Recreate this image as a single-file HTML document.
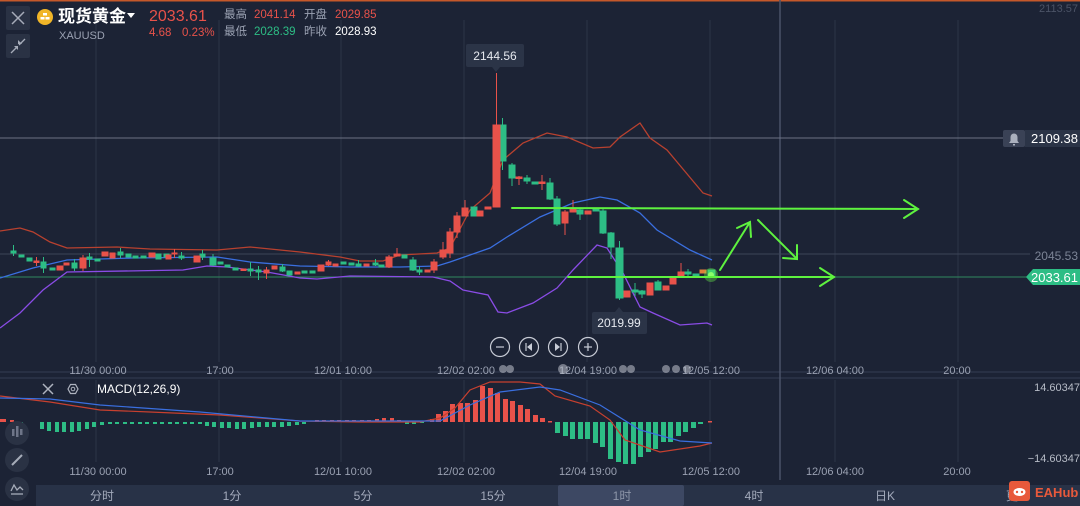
<!DOCTYPE html>
<html><head><meta charset="utf-8"><style>
html,body{margin:0;padding:0;background:#1c2335;width:1080px;height:506px;overflow:hidden;font-family:"Liberation Sans","Noto Sans CJK SC",sans-serif;}
svg{position:absolute;left:0;top:0}
text{font-family:"Liberation Sans","Noto Sans CJK SC",sans-serif}
</style></head><body>
<svg width="1080" height="506" viewBox="0 0 1080 506">
<rect width="1080" height="506" fill="#1c2335"/>
<rect x="0" y="0" width="1080" height="1.5" fill="#c5582a"/>
<!-- grid -->
<g stroke="#2c3447" stroke-width="1">
<line x1="96" y1="20" x2="96" y2="362"/><line x1="219" y1="20" x2="219" y2="362"/><line x1="341" y1="20" x2="341" y2="362"/><line x1="464" y1="20" x2="464" y2="362"/><line x1="587" y1="20" x2="587" y2="362"/><line x1="710" y1="20" x2="710" y2="362"/><line x1="835" y1="20" x2="835" y2="362"/><line x1="958" y1="20" x2="958" y2="362"/>
<line x1="96" y1="380" x2="96" y2="462"/><line x1="219" y1="380" x2="219" y2="462"/><line x1="341" y1="380" x2="341" y2="462"/><line x1="464" y1="380" x2="464" y2="462"/><line x1="587" y1="380" x2="587" y2="462"/><line x1="710" y1="380" x2="710" y2="462"/><line x1="835" y1="380" x2="835" y2="462"/><line x1="958" y1="380" x2="958" y2="462"/>
</g>
<line x1="0" y1="372" x2="1080" y2="372" stroke="#343d52"/>
<line x1="0" y1="378" x2="1080" y2="378" stroke="#343d52"/>
<line x1="780" y1="0" x2="780" y2="480" stroke="#4a5368" stroke-width="1.5"/>
<line x1="0" y1="138" x2="1003" y2="138" stroke="#6b7284" stroke-width="1"/>
<line x1="0" y1="254" x2="1030" y2="254" stroke="#3c4558"/>
<line x1="0" y1="277" x2="1030" y2="277" stroke="#2f8a5e" stroke-width="1"/>
<!-- bands -->
<polyline fill="none" stroke="#b8412f" stroke-width="1.3" points="0,231 20,228 33,232 50,242 67,248 117,247 150,249 217,250 250,247 300,252 340,257 360,261 383,261 400,255 437,253 450,248 470,210 490,193 503,160 523,143 547,133 567,137 593,148 610,147 620,137 640,123 650,138 667,150 703,193 712,196"/>
<polyline fill="none" stroke="#3a6fe0" stroke-width="1.3" points="0,278 33,268 67,260 100,259 133,258 217,257 250,262 300,266 350,267 400,267 437,266 450,262 490,248 507,237 540,217 573,203 600,197 617,200 640,213 657,230 690,250 712,260"/>
<polyline fill="none" stroke="#8a4ce6" stroke-width="1.3" points="0,328 20,313 43,290 67,272 183,270 207,266 227,267 267,272 300,278 317,279 350,276 433,277 450,281 463,290 488,295 498,312 507,313 533,303 557,288 573,270 597,245 607,248 623,273 640,307 653,313 680,325 707,323 712,325"/>
<!-- candles -->
<g stroke-width="1">
<g fill="#2dbd85" stroke="#2dbd85">
<rect x="11" y="251" width="5" height="2"/><line x1="13.5" y1="245" x2="13.5" y2="256"/>
<rect x="19" y="255" width="5" height="2"/><rect x="27" y="258" width="5" height="3"/>
<rect x="41" y="262" width="5" height="6"/><line x1="43.5" y1="257" x2="43.5" y2="273"/>
<rect x="50" y="268" width="5" height="2"/>
<rect x="72" y="263" width="5" height="5"/><line x1="74.5" y1="259" x2="74.5" y2="271"/>
<rect x="87" y="257" width="5" height="2"/><line x1="89.5" y1="253" x2="89.5" y2="267"/>
<rect x="95" y="259" width="5" height="2"/>
<rect x="118" y="252" width="5" height="3"/><line x1="120.5" y1="248" x2="120.5" y2="258"/>
<rect x="126" y="254" width="5" height="3"/><rect x="133" y="256" width="5" height="2"/><rect x="141" y="256" width="5" height="2"/>
<rect x="156" y="254" width="5" height="5"/><rect x="164" y="254" width="5" height="3"/>
<rect x="179" y="256" width="5" height="2"/><line x1="181.5" y1="252" x2="181.5" y2="260"/>
<rect x="200" y="254" width="5" height="3"/><line x1="202.5" y1="250" x2="202.5" y2="260"/>
<rect x="210" y="258" width="6" height="7"/><line x1="213" y1="254" x2="213" y2="266"/>
<rect x="218" y="262" width="5" height="2"/><rect x="225" y="265" width="5" height="2"/>
<rect x="233" y="268" width="5" height="2"/><rect x="248" y="269" width="5" height="2"/><line x1="250.5" y1="262" x2="250.5" y2="276"/>
<rect x="256" y="270" width="5" height="2"/><line x1="258.5" y1="266" x2="258.5" y2="280"/>
<rect x="280" y="267" width="5" height="4"/><line x1="282.5" y1="264" x2="282.5" y2="272"/>
<rect x="287" y="271" width="5" height="4"/><rect x="302" y="271" width="5" height="2"/><rect x="310" y="271" width="5" height="2"/>
<rect x="341" y="262" width="5" height="2"/><rect x="349" y="263" width="5" height="2"/><rect x="356" y="264" width="5" height="2"/><line x1="358.5" y1="260" x2="358.5" y2="267"/>
<rect x="373" y="263" width="5" height="2"/><line x1="375.5" y1="259" x2="375.5" y2="266"/>
<rect x="379" y="265" width="5" height="2"/>
<rect x="402" y="255" width="5" height="3"/>
<rect x="410" y="260" width="6" height="10"/><line x1="413" y1="257" x2="413" y2="271"/>
<rect x="417" y="270" width="5" height="2"/><line x1="419.5" y1="266" x2="419.5" y2="275"/>
<rect x="471" y="207" width="6" height="9"/>
<rect x="499" y="125" width="7" height="36"/><line x1="502.5" y1="118" x2="502.5" y2="170"/>
<rect x="509" y="165" width="6" height="13"/><line x1="512" y1="163" x2="512" y2="186"/>
<rect x="524" y="178" width="6" height="3"/><line x1="527" y1="175" x2="527" y2="184"/>
<rect x="532" y="182" width="6" height="2"/>
<rect x="547" y="183" width="6" height="16"/><line x1="550" y1="178" x2="550" y2="200"/>
<rect x="554" y="199" width="6" height="25"/><line x1="557" y1="196" x2="557" y2="226"/>
<rect x="577" y="210" width="6" height="4"/><line x1="580" y1="208" x2="580" y2="220"/>
<rect x="593" y="209" width="6" height="2"/>
<rect x="600" y="211" width="6" height="22"/><line x1="603" y1="209" x2="603" y2="234"/>
<rect x="608" y="233" width="6" height="14"/><line x1="611" y1="232" x2="611" y2="259"/>
<rect x="616" y="248" width="7" height="50"/><line x1="619.5" y1="241" x2="619.5" y2="300"/>
<rect x="632" y="290" width="6" height="2"/><line x1="635" y1="283" x2="635" y2="296"/>
<rect x="639" y="291" width="6" height="3"/><line x1="642" y1="290" x2="642" y2="298"/>
<rect x="655" y="282" width="6" height="8"/><line x1="658" y1="280" x2="658" y2="290"/>
<rect x="685" y="272" width="6" height="2"/><line x1="688" y1="269" x2="688" y2="276"/>
<rect x="693" y="274" width="6" height="1.5"/>
<rect x="708" y="270" width="7" height="6"/>
</g>
<g fill="#e8524a" stroke="#e8524a">
<rect x="34" y="261" width="5" height="1.5"/><line x1="36.5" y1="257" x2="36.5" y2="266"/>
<rect x="57" y="266" width="6" height="4"/>
<rect x="64" y="263" width="5" height="2"/>
<rect x="80" y="258" width="6" height="10"/><line x1="83" y1="255" x2="83" y2="271"/>
<rect x="102" y="252" width="6" height="4"/>
<rect x="110" y="253" width="5" height="5"/>
<rect x="149" y="253" width="6" height="4"/>
<rect x="166" y="255" width="5" height="4"/>
<rect x="172" y="253" width="5" height="1"/><line x1="174.5" y1="249" x2="174.5" y2="258"/>
<rect x="194" y="256" width="6" height="6"/>
<rect x="241" y="269" width="5" height="1.5"/>
<rect x="264" y="270" width="5" height="3"/><line x1="266.5" y1="267" x2="266.5" y2="279"/>
<rect x="272" y="266" width="5" height="3"/>
<rect x="295" y="272" width="5" height="2"/>
<rect x="318" y="265" width="6" height="6"/>
<rect x="326" y="262" width="5" height="3"/><line x1="328.5" y1="260" x2="328.5" y2="266"/>
<rect x="333" y="264" width="5" height="2"/>
<rect x="364" y="264" width="5" height="2"/>
<rect x="386" y="257" width="6" height="10"/><line x1="389" y1="255" x2="389" y2="268"/>
<rect x="394" y="254" width="6" height="2"/><line x1="397" y1="248" x2="397" y2="256"/>
<rect x="425" y="270" width="5" height="2"/>
<rect x="431" y="262" width="6" height="8"/><line x1="434" y1="259" x2="434" y2="273"/>
<rect x="440" y="250" width="6" height="7"/><line x1="443" y1="242" x2="443" y2="259"/>
<rect x="447" y="232" width="6" height="21"/><line x1="450" y1="228" x2="450" y2="258"/>
<rect x="454" y="216" width="6" height="16"/><line x1="457" y1="212" x2="457" y2="238"/>
<rect x="462" y="208" width="6" height="8"/><line x1="465" y1="200" x2="465" y2="216"/>
<rect x="477" y="211" width="6" height="5"/>
<rect x="485" y="207" width="6" height="2"/>
<rect x="493" y="125" width="7" height="82"/><line x1="496.5" y1="73" x2="496.5" y2="207"/>
<rect x="516" y="177" width="6" height="1.5"/><line x1="519" y1="176" x2="519" y2="185"/>
<rect x="539" y="182" width="6" height="1.5"/><line x1="542" y1="175" x2="542" y2="190"/>
<rect x="562" y="212" width="6" height="11"/><line x1="565" y1="210" x2="565" y2="235"/>
<rect x="570" y="209" width="6" height="3"/><line x1="573" y1="200" x2="573" y2="212"/>
<rect x="585" y="211" width="6" height="3"/>
<rect x="624" y="291" width="6" height="6"/>
<rect x="647" y="283" width="6" height="12"/>
<rect x="663" y="286" width="6" height="4"/>
<rect x="670" y="278" width="6" height="6"/>
<rect x="678" y="272" width="6" height="5"/><line x1="681" y1="263" x2="681" y2="277"/>
<rect x="700" y="270" width="6" height="3" fill="#e0803a" stroke="#e0803a"/>
</g>
</g>
<!-- glow -->
<circle cx="711" cy="275" r="7" fill="#6cff4a" opacity="0.35"/>
<circle cx="711" cy="275" r="3" fill="#8cff6a"/>
<!-- green arrows -->
<g stroke="#5ef23f" stroke-width="2" fill="none" stroke-linecap="round">
<line x1="512" y1="208" x2="918" y2="209"/><polyline points="904,200 918,209 904,218"/>
<line x1="568" y1="277" x2="834" y2="277"/><polyline points="820,268 834,277 820,286"/>
<line x1="720" y1="270" x2="750" y2="222"/><polyline points="737,228 750,222 751,237"/>
<line x1="758" y1="220" x2="797" y2="259"/><polyline points="783,258 797,259 797,245"/>
</g>
<!-- price tooltips -->
<rect x="466" y="44" width="58" height="23" rx="2" fill="#2b3447"/>
<polygon points="492,67 500,67 496,72" fill="#2b3447"/>
<text x="495" y="60" fill="#e6e9ef" font-size="12" text-anchor="middle">2144.56</text>
<rect x="592" y="312" width="55" height="22" rx="2" fill="#2b3447"/>
<polygon points="615,312 623,312 619,307" fill="#2b3447"/>
<text x="619" y="327" fill="#e6e9ef" font-size="12" text-anchor="middle">2019.99</text>
<!-- zoom controls -->
<g stroke="#c8ccd6" stroke-width="1.2" fill="none">
<circle cx="500" cy="347" r="9.5"/><circle cx="529" cy="347" r="9.5"/><circle cx="558" cy="347" r="9.5"/><circle cx="588" cy="347" r="9.5"/>
<line x1="496" y1="347" x2="504" y2="347"/><line x1="584" y1="347" x2="592" y2="347"/><line x1="588" y1="343" x2="588" y2="351"/>
<line x1="526" y1="343" x2="526" y2="351"/><line x1="561" y1="343" x2="561" y2="351"/>
</g>
<polygon points="532,343 532,351 527,347" fill="#c8ccd6"/><polygon points="555,343 555,351 560,347" fill="#c8ccd6"/>
<!-- axis labels -->
<g fill="#9aa1b2" font-size="11" text-anchor="middle">
<text x="98" y="374">11/30 00:00</text><text x="220" y="374">17:00</text><text x="343" y="374">12/01 10:00</text><text x="466" y="374">12/02 02:00</text><text x="588" y="374">12/04 19:00</text><text x="711" y="374">12/05 12:00</text><text x="835" y="374">12/06 04:00</text><text x="957" y="374">20:00</text>
<text x="98" y="475">11/30 00:00</text><text x="220" y="475">17:00</text><text x="343" y="475">12/01 10:00</text><text x="466" y="475">12/02 02:00</text><text x="588" y="475">12/04 19:00</text><text x="711" y="475">12/05 12:00</text><text x="835" y="475">12/06 04:00</text><text x="957" y="475">20:00</text>
</g>
<g fill="#c0c4ce" opacity="0.55"><circle cx="503" cy="369" r="4"/><circle cx="510" cy="369" r="4"/><circle cx="563" cy="369" r="5"/><circle cx="623" cy="369" r="4"/><circle cx="631" cy="369" r="4"/><circle cx="666" cy="369" r="4"/><circle cx="676" cy="369" r="4"/><circle cx="687" cy="369" r="4"/></g>
<!-- right labels -->
<text x="1078" y="12" fill="#4b5366" font-size="11" text-anchor="end">2113.57</text>
<rect x="1003" y="130" width="22" height="17" rx="2" fill="#3a4256"/>
<path d="M1009,143 h10 l-1.5,-2 v-4 a3.5,3.5 0 0 0 -7,0 v4 z M1013,144 h2 v1.5 h-2z" fill="#aab0bd"/>
<rect x="1025" y="130" width="55" height="17" fill="#2b3447"/>
<text x="1078" y="143" fill="#fff" font-size="13" text-anchor="end">2109.38</text>
<text x="1078" y="260" fill="#7c8496" font-size="12" text-anchor="end">2045.53</text>
<polygon points="1026,277 1033,269 1080,269 1080,285 1033,285" fill="#2dbd85"/>
<text x="1078" y="282" fill="#fff" font-size="13" text-anchor="end">2033.61</text>
<text x="1080" y="391" fill="#b7bcc7" font-size="11" text-anchor="end">14.60347</text>
<text x="1080" y="462" fill="#b7bcc7" font-size="11" text-anchor="end">−14.60347</text>
<!-- MACD -->
<g fill="#2dbd85">
<rect x="19" y="422" width="4" height="3"/><rect x="40" y="422" width="4" height="7"/><rect x="47" y="422" width="4" height="9"/><rect x="55" y="422" width="4" height="10"/><rect x="62" y="422" width="4" height="10"/><rect x="70" y="422" width="4" height="10"/><rect x="77" y="422" width="4" height="9"/><rect x="85" y="422" width="4" height="7"/><rect x="92" y="422" width="4" height="5"/><rect x="100" y="422" width="4" height="3"/>
<rect x="108" y="422" width="4" height="2"/><rect x="115" y="422" width="4" height="2"/><rect x="123" y="422" width="4" height="2"/><rect x="130" y="422" width="4" height="2"/><rect x="138" y="422" width="4" height="2"/><rect x="145" y="422" width="4" height="2"/><rect x="153" y="422" width="4" height="2"/><rect x="160" y="422" width="4" height="2"/><rect x="168" y="422" width="4" height="2"/><rect x="175" y="422" width="4" height="2"/><rect x="183" y="422" width="4" height="2"/><rect x="190" y="422" width="4" height="2"/><rect x="198" y="422" width="4" height="2"/>
<rect x="205" y="422" width="4" height="4"/><rect x="212" y="422" width="4" height="5"/><rect x="220" y="422" width="4" height="6"/><rect x="227" y="422" width="4" height="6"/><rect x="235" y="422" width="4" height="7"/><rect x="242" y="422" width="4" height="7"/><rect x="250" y="422" width="4" height="6"/><rect x="257" y="422" width="4" height="5"/><rect x="265" y="422" width="4" height="5"/><rect x="272" y="422" width="4" height="5"/><rect x="280" y="422" width="4" height="5"/><rect x="287" y="422" width="4" height="4"/><rect x="295" y="422" width="4" height="3"/><rect x="302" y="422" width="4" height="2"/>
<rect x="405" y="422" width="4" height="2"/><rect x="412" y="422" width="4" height="2"/><rect x="420" y="422" width="4" height="1"/>
<rect x="555" y="422" width="5" height="11"/><rect x="563" y="422" width="5" height="14"/><rect x="570" y="422" width="5" height="17"/><rect x="578" y="422" width="5" height="17"/><rect x="585" y="422" width="5" height="17"/><rect x="593" y="422" width="5" height="21"/><rect x="600" y="422" width="5" height="25"/><rect x="608" y="422" width="5" height="37"/><rect x="616" y="422" width="5" height="40"/><rect x="623" y="422" width="5" height="42"/><rect x="631" y="422" width="5" height="42"/><rect x="638" y="422" width="5" height="35"/><rect x="646" y="422" width="5" height="30"/><rect x="653" y="422" width="5" height="27"/><rect x="661" y="422" width="5" height="20"/><rect x="668" y="422" width="5" height="20"/><rect x="676" y="422" width="5" height="14"/><rect x="683" y="422" width="5" height="10"/><rect x="691" y="422" width="5" height="6"/><rect x="698" y="422" width="5" height="2"/>
</g>
<g fill="#e8524a">
<rect x="0" y="419" width="6" height="3"/><rect x="10" y="420" width="4" height="2"/>
<rect x="315" y="420" width="4" height="2"/><rect x="322" y="420" width="4" height="2"/><rect x="330" y="420" width="4" height="2"/><rect x="337" y="420" width="4" height="2"/><rect x="345" y="420" width="4" height="2"/><rect x="352" y="420" width="4" height="2"/><rect x="360" y="420" width="4" height="2"/><rect x="367" y="420" width="4" height="2"/><rect x="375" y="419" width="4" height="3"/><rect x="382" y="418" width="4" height="4"/><rect x="390" y="418" width="4" height="4"/><rect x="397" y="420" width="4" height="2"/>
<rect x="430" y="419" width="4" height="3"/><rect x="436" y="414" width="5" height="8"/><rect x="443" y="411" width="5" height="11"/><rect x="450" y="404" width="5" height="18"/><rect x="458" y="403" width="5" height="19"/><rect x="465" y="403" width="5" height="19"/><rect x="473" y="400" width="5" height="22"/><rect x="480" y="386" width="5" height="36"/><rect x="488" y="388" width="5" height="34"/><rect x="495" y="393" width="5" height="29"/><rect x="503" y="399" width="5" height="23"/><rect x="510" y="401" width="5" height="21"/><rect x="518" y="405" width="5" height="17"/><rect x="525" y="409" width="5" height="13"/><rect x="533" y="415" width="5" height="7"/><rect x="540" y="418" width="5" height="4"/><rect x="548" y="421" width="4" height="1.5"/><rect x="708" y="421" width="4" height="1.5"/>
</g>
<polyline fill="none" stroke="#c7402f" stroke-width="1.2" points="0,396 50,402 100,410 150,412 220,415 300,421 360,422 420,422 440,418 455,408 470,390 490,382 520,382 540,384 555,396 590,406 610,420 625,440 660,452 700,446 712,443"/>
<polyline fill="none" stroke="#3a6fe0" stroke-width="1.2" points="0,398 50,399 100,405 200,412 300,421 440,421 470,405 500,392 540,387 560,390 600,405 640,430 680,441 712,443"/>
<!-- MACD header -->
<g stroke="#aeb3bf" stroke-width="1.5"><line x1="43" y1="384" x2="53" y2="394"/><line x1="53" y1="384" x2="43" y2="394"/></g>
<polygon points="68,389 70.5,384.5 75.5,384.5 78,389 75.5,393.5 70.5,393.5" fill="none" stroke="#aeb3bf" stroke-width="1.2"/>
<circle cx="73" cy="389" r="1.8" fill="none" stroke="#aeb3bf"/>
<text x="97" y="393" fill="#fff" font-size="12">MACD(12,26,9)</text>
<!-- left toolbar -->
<rect x="6" y="6" width="24" height="24" rx="2" fill="#2a3244"/>
<g stroke="#a6acb9" stroke-width="1.5"><line x1="12" y1="12" x2="24" y2="24"/><line x1="24" y1="12" x2="12" y2="24"/></g>
<rect x="6" y="34" width="24" height="24" rx="2" fill="#2a3244"/>
<g stroke="#a6acb9" stroke-width="1.3"><line x1="11" y1="53" x2="17" y2="47"/><line x1="25" y1="39" x2="19" y2="45"/></g>
<polygon points="14,46 18,46 18,50" fill="#a6acb9"/><polygon points="22,44 18,44 18,40" fill="#a6acb9"/>
<circle cx="17" cy="433" r="12" fill="#2a3244"/>
<g fill="#6e7588"><rect x="12" y="429" width="2.5" height="7"/><rect x="16" y="426" width="2.5" height="11"/><rect x="20" y="429" width="2.5" height="6"/></g>
<circle cx="17" cy="460" r="12" fill="#2a3244"/>
<line x1="12" y1="465" x2="22" y2="455" stroke="#a6acb9" stroke-width="2"/>
<circle cx="17" cy="489" r="12" fill="#2a3244"/>
<polyline points="11,491 14,485 17,490 20,487 23,490" fill="none" stroke="#a6acb9" stroke-width="1.3"/>
<line x1="11" y1="494" x2="23" y2="494" stroke="#a6acb9" stroke-width="1.3"/>
<!-- header -->
<circle cx="45" cy="17" r="8" fill="#f0b528"/>
<g fill="#fff"><rect x="43" y="13" width="4" height="2.5"/><rect x="40.5" y="17" width="4" height="2.5"/><rect x="45.5" y="17" width="4" height="2.5"/></g>
<text x="58" y="22" fill="#fff" font-size="17" font-weight="bold">现货黄金</text>
<polygon points="127,13 135,13 131,18" fill="#fff"/>
<text x="59" y="39" fill="#9aa1b2" font-size="11">XAUUSD</text>
<text x="149" y="21" fill="#e8524a" font-size="16">2033.61</text>
<text x="149" y="36" fill="#e8524a" font-size="11.5">4.68</text>
<text x="182" y="36" fill="#e8524a" font-size="11.5">0.23%</text>
<g font-size="11.5">
<text x="224" y="18" fill="#9aa1b2">最高</text><text x="254" y="18" fill="#e8524a">2041.14</text>
<text x="304" y="18" fill="#9aa1b2">开盘</text><text x="335" y="18" fill="#e8524a">2029.85</text>
<text x="224" y="35" fill="#9aa1b2">最低</text><text x="254" y="35" fill="#2dbd85">2028.39</text>
<text x="304" y="35" fill="#9aa1b2">昨收</text><text x="335" y="35" fill="#fff">2028.93</text>
</g>
<!-- bottom tabs -->
<rect x="36" y="485" width="1044" height="21" fill="#283247"/>
<rect x="558" y="485" width="126" height="21" rx="2" fill="#3d4863"/>
<g fill="#a3aabb" font-size="12" text-anchor="middle">
<text x="102" y="500">分时</text><text x="232" y="500">1分</text><text x="363" y="500">5分</text><text x="493" y="500">15分</text><text x="622" y="500" fill="#8e96a9">1时</text><text x="754" y="500">4时</text><text x="885" y="500">日K</text><text x="1012" y="500">更</text>
</g>
<rect x="1009" y="481" width="21" height="20" rx="3" fill="#e8593b"/>
<ellipse cx="1019.5" cy="492" rx="6" ry="4" fill="#fff"/>
<circle cx="1017" cy="492" r="1.2" fill="#e8593b"/><circle cx="1022" cy="492" r="1.2" fill="#e8593b"/>
<text x="1035" y="497" fill="#e8593b" font-size="13" font-weight="bold" font-family="Liberation Serif, serif">EAHub</text>
</svg>
</body></html>
